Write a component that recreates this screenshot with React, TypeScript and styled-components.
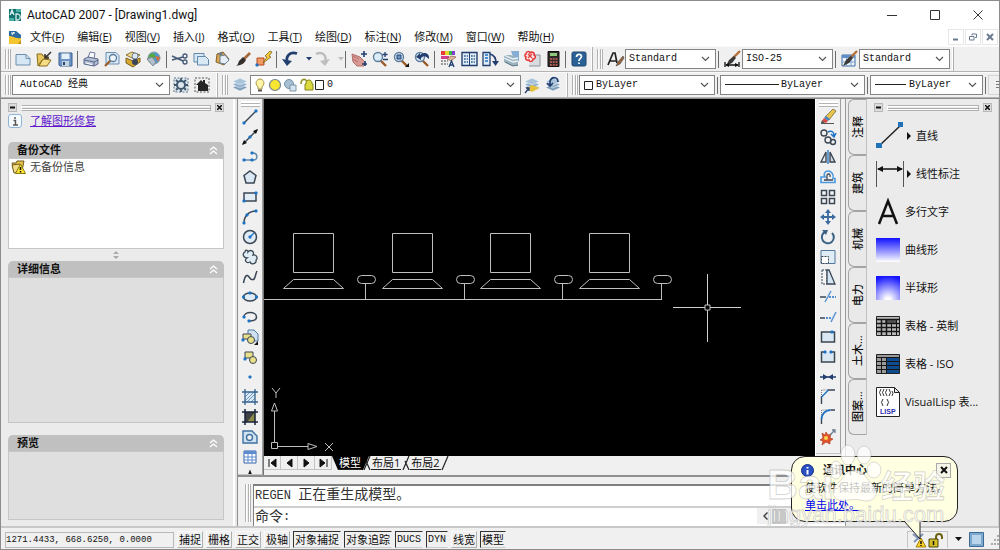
import React from "react";
import styled, { createGlobalStyle, css } from "styled-components";

const ui = '"Open Sans", "Noto Sans CJK SC", sans-serif';
const mono = '"Liberation Mono", "Noto Sans CJK SC", monospace';

const GlobalStyle = createGlobalStyle`
  * { box-sizing: border-box; }
  body { margin: 0; background: #f0f0f0; }
  button, select, input { font: inherit; color: inherit; margin: 0; }
  button { padding: 0; border: 0; background: none; }
`;

/* ---------- frame ---------- */

const Window = styled.div`
  position: relative;
  display: flex;
  flex-direction: column;
  height: 100vh;
  min-height: 520px;
  overflow: hidden;
  border: 1px solid #8c8c8c;
  background: #f0f0f0;
  color: #111;
  font: 11px/16px ${ui};
`;

const TitleBar = styled.header`
  display: flex;
  align-items: center;
  height: 27px;
  flex: none;
  padding-left: 7px;
  background: #fff;
`;

const Title = styled.h1`
  flex: 1;
  margin: 0 0 0 5px;
  font: 400 12px/16px Roboto, sans-serif;
`;

const CaptionButton = styled.button`
  display: grid;
  place-items: center;
  width: 43px;
  height: 26px;
`;

const MenuBar = styled.nav`
  display: flex;
  align-items: center;
  height: 18px;
  flex: none;
  padding-left: 7px;
  background: #fff;
`;

const MenuList = styled.div`
  display: flex;
  flex: 1;
  gap: 13px;
  margin-left: 7px;
`;

const MenuButton = styled.button`
  white-space: nowrap;
`;

const ChildButton = styled.button`
  display: grid;
  place-items: center;
  width: 16px;
  height: 16px;
  margin-right: 1px;
  border: 1px solid #e6e6e6;
`;

/* ---------- toolbars ---------- */

const ToolRow = styled.div`
  display: flex;
  height: 26px;
  flex: none;
  overflow: hidden;
  border-top: 1px solid #fafafa;
  border-bottom: 1px solid #b4b4b4;
`;

const Bar = styled.div<{ $end?: number }>`
  display: flex;
  align-items: center;
  flex: none;
  padding: 0 ${(p) => p.$end ?? 3}px 0 4px;
  border-right: 1px solid #b0b0b0;
  box-shadow: inset -1px 0 #fff;
`;

const Grip = styled.div`
  width: 6px;
  height: 20px;
  margin-right: 1px;
  border: solid #b2b2b2;
  border-width: 0 1px;
  background: linear-gradient(90deg, #fff 1px, #f0f0f0 1px, #f0f0f0 2px, #b2b2b2 2px, #b2b2b2 3px, #fff 3px);
`;

const ToolButton = styled.button<{ $w?: number }>`
  display: grid;
  place-items: center;
  flex: none;
  width: ${(p) => p.$w ?? 21}px;
  height: 20px;
`;

const DisabledField = styled.button`
  display: grid;
  place-items: center start;
  flex: none;
  width: 90px;
  height: 20px;
  padding-left: 7px;
  border: 1px solid #d4d4d4;
`;

const Separator = styled.span`
  width: 1px;
  height: 17px;
  margin: 0 2px;
  background: #6c6c6c;
`;

const Glyph = styled.svg`
  display: block;
  overflow: visible;
`;

const ComboFrame = styled.div<{ $w: number }>`
  display: flex;
  align-items: center;
  position: relative;
  flex: none;
  width: ${(p) => p.$w}px;
  height: 20px;
  border: 1px solid #848484;
  background: #fff;
`;

const ComboSelect = styled.select<{ $pad: number }>`
  flex: 1;
  min-width: 0;
  height: 18px;
  padding: 0 16px 0 ${(p) => p.$pad}px;
  border: 0;
  outline: 0;
  background: none;
  appearance: none;
  font: 10px/18px ${mono};
`;

const ComboSwatch = styled.span`
  position: absolute;
  left: 4px;
  display: flex;
  align-items: center;
  pointer-events: none;
`;

const ComboArrow = styled.svg`
  position: absolute;
  right: 5px;
  pointer-events: none;
`;

/* ---------- work area ---------- */

const Workspace = styled.div`
  display: flex;
  flex: 1;
  min-height: 0;
  border-top: 1px solid #8a8a8a;
`;

const Recovery = styled.aside`
  display: flex;
  flex-direction: column;
  flex: none;
  width: 232px;
  padding: 4px 9px 6px 7px;
  background: #ebebeb;
`;

const Splitter = styled.div`
  flex: none;
  width: 5px;
  border: solid #8f8f8f;
  border-width: 0 1px 0 0;
  background: linear-gradient(90deg, #fff 2px, #e8e8e8 2px);
`;

const PaletteHead = styled.div`
  display: flex;
  align-items: center;
  flex: none;
  height: 9px;
  gap: 4px;
`;

const PaletteGrip = styled.span`
  flex: 1;
  height: 6px;
  border: 1px solid #b0b0b0;
  border-left-color: #fff;
  background: linear-gradient(#fff 1px, #ebebeb 1px, #ebebeb 2px, #b0b0b0 2px, #b0b0b0 3px, #fff 3px);
`;

const PaletteButton = styled.button`
  display: grid;
  place-items: center;
  width: 9px;
  height: 9px;
  border: 1px solid #b8b8b8;
  background: #dcdcdc;
`;

const InfoRow = styled.div`
  display: flex;
  align-items: center;
  flex: none;
  gap: 8px;
  height: 18px;
  margin-bottom: 12px;
`;

const InfoLink = styled.a`
  color: #6018cc;
`;

const Card = styled.section<{ $grow: number }>`
  display: flex;
  flex-direction: column;
  flex: ${(p) => p.$grow} 1 0;
  min-height: 30px;
`;

const CardHead = styled.h2`
  display: flex;
  align-items: center;
  justify-content: space-between;
  flex: none;
  height: 16px;
  margin: 0;
  padding: 0 6px 0 9px;
  border-radius: 5px 5px 0 0;
  background: #c0c0c0;
  font-size: 11px;
  font-weight: 700;
`;

const CardBody = styled.div<{ $bg: string }>`
  display: flex;
  align-items: flex-start;
  gap: 4px;
  flex: 1;
  padding: 0 2px;
  border: 1px solid #c6c6c6;
  background: ${(p) => p.$bg};
  color: #444;
`;

const CardGap = styled.div`
  display: grid;
  place-items: center;
  flex: none;
  height: 12px;
`;

const Center = styled.main`
  display: flex;
  flex-direction: column;
  flex: 1;
  min-width: 0;
`;

const CenterTop = styled.div`
  display: flex;
  flex: 1;
  min-height: 0;
  border-bottom: 2px solid #8f8f8f;
`;

const SideTools = styled.div<{ $gap?: number }>`
  display: flex;
  flex-direction: column;
  align-items: center;
  flex: none;
  width: 25px;
  height: max-content;
  max-height: 100%;
  overflow: hidden;
  margin-right: ${(p) => p.$gap ?? 0}px;
  padding: 2px 2px 6px;
  border-right: 1px solid #a0a0a0;
  border-bottom: 1px solid #c4c4c4;
`;

const SideGrip = styled.span`
  width: 19px;
  height: 6px;
  flex: none;
  border: solid #b4b4b4;
  border-width: 0 0 1px;
  background: linear-gradient(#fff 2px, #b4b4b4 2px, #b4b4b4 3px, #fff 3px);
`;

const DrawColumn = styled.div`
  display: flex;
  flex-direction: column;
  flex: 1;
  min-width: 0;
  border-left: 1px solid #777;
  border-right: 1px solid #fff;
`;

const Canvas = styled.svg`
  display: block;
  flex: 1;
  width: 100%;
  min-height: 0;
  background: #000;
`;

const LayoutTabs = styled.div`
  display: flex;
  align-items: stretch;
  flex: none;
  height: 14px;
  margin-bottom: 5px;
  background: #f0f0f0;
`;

const NavButton = styled.button`
  display: grid;
  place-items: center;
  width: 17px;
  border: solid #c4c4c4;
  border-width: 0 1px 1px 0;
`;

const LayoutTab = styled.button<{ $active?: boolean }>`
  padding: 0 1px;
  border-bottom: 1px solid #222;
  line-height: 12px;
  ${(p) =>
    p.$active &&
    css`
      background: #000;
      color: #fff;
    `}
`;

const Command = styled.div`
  display: flex;
  flex: none;
  height: 49px;
  padding: 7px 0 0 7px;
`;

const CommandGrip = styled(Grip)`
  height: 38px;
  margin-right: 2px;
`;

const CommandBox = styled.div`
  display: flex;
  flex-direction: column;
  flex: 1;
  border: solid #808080;
  border-width: 2px 0 0 1px;
  background: #fff;
  font: 12px/20px ${mono};
  color: #333;
`;

const History = styled.div`
  height: 23px;
  padding-left: 1px;
  line-height: 18px;
  border-bottom: 2px solid #cfcfcf;
`;

const Cjk = styled.span`
  font-size: 14px;
`;

const Prompt = styled.label`
  display: flex;
  padding-left: 1px;
  line-height: 18px;
`;

const PromptInput = styled.input`
  flex: 1;
  min-width: 0;
  height: 17px;
  padding: 0 2px;
  border: 0;
  outline: 0;
`;

const ScrollStub = styled.span`
  display: flex;
  align-items: center;
  gap: 4px;
  width: 88px;
  height: 16px;
  padding-left: 6px;
  background: #f0f0f0;
`;

const Thumb = styled.span`
  width: 14px;
  height: 15px;
  background: #c8c8c8;
`;

/* ---------- tool palettes ---------- */

const TabStrip = styled.div`
  display: flex;
  flex-direction: column;
  flex: none;
  width: 22px;
  padding-left: 2px;
  border-left: 1px solid #999;
  background: #ebebeb;
`;

const SideTab = styled.button`
  height: 56px;
  flex: none;
  border: 1px solid #a4a4a4;
  border-right-color: #c0c0c0;
  border-radius: 6px 0 0 6px;
  background: #e9e9e9;
  writing-mode: vertical-rl;
  text-orientation: sideways;
  font-weight: 500;
  line-height: 17px;

  span {
    display: block;
    transform: rotate(180deg);
  }
`;

const Palette = styled.aside`
  flex: none;
  width: 132px;
  padding: 4px 6px 0 7px;
  border-right: 1px solid #d0d0d0;
  background: #ebebeb;
`;

const PaletteList = styled.div`
  display: flex;
  flex-direction: column;
  padding: 5px 0 0 2px;
`;

const PaletteItem = styled.button`
  display: flex;
  align-items: center;
  gap: 5px;
  height: 38px;
  white-space: nowrap;

  > svg { overflow: visible; }
`;

const ItemLabel = styled.span`
  display: flex;
  align-items: center;
  gap: 5px;
`;

/* ---------- status bar ---------- */

const Status = styled.footer`
  display: flex;
  align-items: center;
  flex: none;
  height: 23px;
  padding: 2px 0 0 4px;
  border-top: 2px solid #c8c8c8;
`;

const Coords = styled.output`
  width: 169px;
  height: 16px;
  margin-right: 3px;
  border: 1px solid #b8b8b8;
  font: 9px/15px ${mono};
`;

const Toggle = styled.button<{ $on?: boolean; $latin?: boolean }>`
  height: 17px;
  margin-right: 3px;
  padding: 0 1px;
  border: 1px solid;
  border-color: ${(p) => (p.$on ? "#333 #f0f0f0 #ccc #333" : "#fafafa #b0b0b0 #b0b0b0 #fafafa")};
  line-height: 15px;
  white-space: nowrap;
  ${(p) => p.$latin && css`font: 10px/15px ${mono};`}
`;

const Tray = styled.div`
  display: flex;
  align-items: center;
  margin-left: auto;
  gap: 7px;
`;

const TrayBox = styled.div`
  display: flex;
  gap: 1px;
  align-items: center;
  height: 17px;
  padding: 0 3px;
  border: solid #c4c4c4;
  border-width: 1px 1px 0;
`;

/* ---------- notification ---------- */

const Balloon = styled.div`
  position: absolute;
  right: 41px;
  bottom: 27px;
  width: 167px;
  height: 66px;
  padding: 4px 6px 0 9px;
  border: 1px solid #222;
  border-radius: 14px;
  background: #ffffe1;
`;

const BalloonHead = styled.div`
  display: flex;
  align-items: center;
  gap: 9px;
  height: 18px;

  strong { flex: 1; }
`;

const BalloonText = styled.p`
  margin: 0 0 0 4px;
  line-height: 17px;
  white-space: nowrap;

  a { color: #0000ee; }
`;

const BalloonClose = styled.button`
  display: grid;
  place-items: center;
  width: 15px;
  height: 15px;
  border: 1px solid #aaa;
  background: #f4f4e8;
`;

const BalloonTail = styled.svg`
  position: absolute;
  right: 36px;
  top: 64px;
`;

const Watermark = styled.svg`
  position: absolute;
  right: 42px;
  bottom: 16px;
  pointer-events: none;
`;

/* ---------- drawings of the icons, all on an 18 x 18 grid ---------- */

const ink = "#3b4754";
const blue = "#1c72c4";
const navy = "#233f70";
const pale = "#cfe0f1";

const dots = (...pts: [number, number][]) =>
  pts.map(([x, y]) => <rect key={`${x}-${y}`} x={x - 1.5} y={y - 1.5} width="3" height="3" rx="1" fill={blue} />);

const magnifier = (
  <>
    <path d="m9 10 6 6" stroke="#9a5a28" strokeWidth="2.4" />
    <circle cx="7" cy="7" r="4.5" fill="#dcebf8" stroke="#5e7f9c" strokeWidth="1.4" />
  </>
);

const layers = (
  <>
    <path d="m9 8 7.500 3.500L9 15 1.500 11.500Z" fill="#7d9cbb" stroke="#fff" strokeWidth=".5" />
    <path d="m9 5 7.500 3.500L9 12 1.500 8.500Z" fill="#8fadc9" stroke="#fff" strokeWidth=".5" />
    <path d="m9 2 7.500 3.500L9 9 1.500 5.500Z" fill="#a9c3da" stroke="#fff" strokeWidth=".5" />
  </>
);

const brush = (
  <>
    <path d="M17 1 9 9" stroke="#b5703a" strokeWidth="2.4" />
    <path d="m11 6 2 2-4 5-6 3 3-6Z" fill="#3a3a3a" />
  </>
);

const art: Record<string, React.ReactNode> = {
  new: <path d="M2 4.500h10l4 4V15H2Z M12 4.500v4h4" fill="#d5e6f4" stroke="#6c8fae" />,
  open: (
    <>
      <path d="M2 4h5l1 2h5v3l-6 1-4 6Z" fill="#e8c75e" stroke="#8b6c1a" />
      <path d="M4 16 8 9l8 1-4 6Z" fill="#f6dc84" stroke="#8b6c1a" />
      <path d="m16 2-6 6m0-4v4h4" fill="none" stroke="#333" strokeWidth="1.500" />
    </>
  ),
  save: (
    <>
      <path d="M3 3h13v13H4l-1-1Z" fill="#6b93c4" stroke="#3c5f8d" />
      <path d="M5.500 3.500h8V9h-8Z" fill="#e6f0f8" />
      <path d="M6 11h7v5H6Z" fill="#c3d3e2" /><path d="M7 12h2v3H7Z" fill="#2c4569" />
    </>
  ),
  print: (
    <>
      <path d="M6 8 8 2l5 1-1 6" fill="#f7f9fd" stroke="#6e7c9c" />
      <path d="m2 9 4-2 10 2v5l-4 2-10-2Z" fill="#b5c0d6" stroke="#59678a" />
      <path d="m2 10 10 2 4-2m-4 2v4" fill="none" stroke="#59678a" />
      <path d="m4 13 6 1.500" stroke="#fff" />
    </>
  ),
  preview: (
    <>
      <path d="M3 2.500h10l3 3V14H3Z" fill="#d8e8f5" stroke="#6c8fae" />
      <path d="m8 10-6 6" stroke="#9a5a28" strokeWidth="2.200" />
      <circle cx="10" cy="8" r="3.500" fill="#eef6fc" stroke="#587a9b" strokeWidth="1.300" />
    </>
  ),
  publish: (
    <>
      <path d="m2 5 6-3 8 3-6 4Z" fill="#f2dd8f" stroke="#8d7430" />
      <circle cx="11" cy="6" r="3" fill="#dfe9f3" stroke="#6a7f94" />
      <path d="m2 8 7 3 7-3v4l-7 5-7-4Z" fill="#d6a72e" stroke="#7c6421" />
      <circle cx="11" cy="12" r="3" fill="#39465a" />
    </>
  ),
  web: (
    <>
      <circle cx="9" cy="8" r="6" fill="#4c9bd0" stroke="#8a9aa6" />
      <path d="M5 4c3-2 6 0 5 3s-4 3-5 6c-2-2-2-7 0-9Z" fill="#57a843" />
      <path d="m2 9 5-2 4 5-3 4Z" fill="#b4c0cc" stroke="#7a8794" /><path d="m10 6 5 1-2 5Z" fill="#d66a3a" />
    </>
  ),
  cut: (
    <>
      <path d="m1 6 11 5M1 10l11-3" stroke="#475a78" strokeWidth="1.500" />
      <circle cx="14" cy="6" r="2" fill="none" stroke="#475a78" strokeWidth="1.300" />
      <circle cx="14" cy="12" r="2" fill="none" stroke="#475a78" strokeWidth="1.300" />
    </>
  ),
  copy: (
    <>
      <path d="M2 3.500h10V12H2Z" fill="#d8e8f5" stroke="#6187aa" />
      <path d="M5.500 6.500h8l3 3V15h-11Z" fill="#d8e8f5" stroke="#6187aa" />
    </>
  ),
  paste: (
    <>
      <path d="m4 4 6-2 6 7-5 6-8-3Z" fill="#dca64c" stroke="#7d6132" />
      <path d="m7 6 5-1 4 5-4 4-5-1Z" fill="#e6eff7" stroke="#6b7f92" /><path d="m5 4 3-2 2 2-3 2Z" fill="#707c88" />
    </>
  ),
  match: (
    <>
      <path d="m16 3-6 6" stroke="#a4683a" strokeWidth="2.600" />
      <path d="m9 7 3 3c-2 4-5 5-10 6 2-1 2-3 3-5Z" fill="#33302e" />
    </>
  ),
  block: (
    <>
      <path d="M2 8h7v7H2Z" fill="#f29a64" stroke="#b1481e" />
      <path d="m15 1-5 5 2 1-4 6 8-6-2-1 3-4Z" fill="#f5cf3b" stroke="#83641c" strokeWidth=".8" />
      {dots([2, 15])}
    </>
  ),
  undo: (
    <>
      <path d="M16 3.500C9 1 5 6 6 11" fill="none" stroke={navy} strokeWidth="2.800" />
      <path d="m1 9 5 7 5-5Z" fill={navy} />
    </>
  ),
  redo: (
    <>
      <path d="M3 4c7-3 11 2 9 8" fill="none" stroke="#bdbdbd" strokeWidth="2.400" />
      <path d="m17 9-5 7-5-5Z" fill="#bdbdbd" />
    </>
  ),
  down: <path d="m6 7 6 0-3 3.500Z" fill={navy} />,
  downOff: <path d="m6 7 6 0-3 3.500Z" fill="#bdbdbd" />,
  pan: (
    <>
      <path d="m2 4 8 3 5 5-1 4-7 0-4-4Z" fill="#d99a94" stroke="#b2706c" />
      <path d="m3 6 6 3M3 9l5 3" stroke="#b2706c" />
      <path d="M14 1v6m-3-3h6M15 11v5m-3-2h5" stroke={navy} strokeWidth="1.600" />
    </>
  ),
  zoomRt: <>{magnifier}<path d="M14 2v5m-2.500-2.500h5M12 9.500h5" stroke={navy} strokeWidth="1.300" /></>,
  zoomWin: <>{magnifier}<path d="M5 5h4v4H5Z" fill="#6e98c4" stroke={navy} /><path d="M17 13v4h-4Z" fill="#111" /></>,
  zoomPrev: <>{magnifier}<path d="M16 9c1-6-5-8-9-4V3L3 7l5 3V8c3-3 5-2 8 1Z" fill={navy} /></>,
  props: (
    <>
      <path d="M2 1h4v4H2Z" fill="#e83a3a" /><path d="M6 1h4v4H6Z" fill="#e9d32d" /><path d="M10 1h3v4h-3Z" fill="#38b34a" /><path d="M13 1h3v4h-3Z" fill="#7b3fd0" />
      <path d="M2 6h8v3H2Z" fill="#d23f8c" /><path d="m8 9 4-3 5 1-5 4Z" fill="#e2b49a" stroke="#8a5f48" strokeWidth=".7" />
      <path d="M2 11h7M2 14h7" stroke="#444" strokeDasharray="2 1" /><path d="m10 17 2.500-6 2.500 6m-4-2h3" fill="none" stroke={navy} strokeWidth="1.300" />
    </>
  ),
  center: (
    <>
      <path d="M2 2.500h15v13H2Z" fill="#e1edf6" stroke={navy} strokeWidth="1.400" />
      <path d="M9.500 3v12" stroke={navy} />
      <path d="M4 6h4M4 9h4M4 12h4M11 6h4M11 9h4M11 12h4" stroke="#5c82a8" strokeWidth="2" strokeDasharray="1.700 1" />
    </>
  ),
  palettes: (
    <>
      <path d="M2 2.500h7v13H2Z" fill="#e1edf6" stroke={navy} strokeWidth="1.300" />
      <path d="M4 5h3M4 8h3M4 11h3" stroke={blue} strokeWidth="1.600" />
      <path d="M9 4c4 1 6 4 6 9" fill="none" stroke={navy} strokeWidth="1.800" />
      <path d="m11 11 7 0-3.500 5Z" fill={navy} />
    </>
  ),
  sheets: (
    <>
      <path d="M9 1h8v10l-4 2Z" fill="#86add4" />
      <path d="M2 5h7l7 4v7l-6 0-8-4Z" fill="#9db4c0" />
      <path d="m2 5 9 4 5-1M2 8l9 4 5-1" fill="none" stroke="#e9f1f5" strokeWidth="1.300" />
      <path d="m3 12 8 4 5-1" fill="none" stroke="#5d7685" />
    </>
  ),
  markup: (
    <>
      <path d="M8 5h9v11H6" fill="#d9dde2" stroke="#8c939b" />
      <path d="M3 4c0-3 4-3 4-1 2-2 5 0 4 2 2 1 2 4-1 4 0 3-4 3-4 1-3 1-4-2-3-3-2-1-1-3 0-3Z" fill="#fbe4e4" stroke="#e23a3a" strokeWidth="1.500" />
      <path d="m5 4 4 4m0-4L5 8" stroke="#e23a3a" strokeWidth="1.200" />
    </>
  ),
  calc: (
    <>
      <path d="M4 1.500h11v15H4Z" fill="#2f2b2b" stroke="#111" /><path d="M6 3h7v3H6Z" fill="#8fca7c" />
      <path d="M6 9h7.500M6 12h7.500M6 15h7.500" stroke="#e06a5c" strokeWidth="1.600" strokeDasharray="1.800 1" />
    </>
  ),
  help: (
    <>
      <rect x="2" y="2" width="14" height="14" rx="1.500" fill="#2a6298" stroke="#1d456e" />
      <path d="M6.500 7c0-3.500 5-3.500 5-.5C11.500 8.500 9 8.500 9 11m0 1.500V14" fill="none" stroke="#fff" strokeWidth="1.700" />
    </>
  ),
  textStyle: <>
    <path d="M2 15 7 3h2l2 10M4 11h6" fill="none" stroke="#222" strokeWidth="1.700" />
    <path d="m17 6-5 6-2 4 4-2 4-6Z" fill="#9a6238" stroke="#444" strokeWidth=".6" /></>,
  dimStyle: <>{brush}<path d="M2 12v5m14-5v5M3 15h12" stroke="#111" strokeWidth="1.300" /><path d="m2 15 4-2v4Zm14 0-4-2v4Z" fill="#111" /></>,
  tableStyle: <>
    <path d="M2 5h13v11H2Z" fill="#eef4fb" stroke="#3d6ca4" /><path d="M2 5h13v3H2Z" fill="#5f8fca" />
    <path d="M2 12h13M6.500 8v8M11 8v8" stroke="#7ea3cf" />{brush}</>,
  gear: (
    <>
      <path d="M2 2h14v14H2Z" fill="#dfe7ee" stroke="#60758a" strokeDasharray="2 1.500" />
      <circle cx="9" cy="9" r="4" fill="none" stroke="#40586f" strokeWidth="2" />
      <path d="M9 2v3m0 8v3M2 9h3m8 0h3M4 4l2 2m6 6 2 2m0-10-2 2m-6 6-2 2" stroke="#40586f" strokeWidth="1.800" />
    </>
  ),
  house: (
    <>
      <path d="M2 2h14v14H2Z" fill="none" stroke="#555" strokeDasharray="2 1.500" />
      <path d="m3 9 5-5 2 2V4h2v3l3 2v6H5V9Z" fill="#262626" />
    </>
  ),
  layers,
  layerCurrent: <>{layers}<path d="m9 9 7.500 3L9 16l-6-3Z" fill="#e4c23c" /><path d="m2 17 4-5m-3 0h3v3" stroke={navy} fill="none" strokeWidth="1.300" /></>,
  layerPrev: <>{layers}<path d="M14 6c0-5-6-6-8-1v4m-3-2 3 3 3-3" stroke={navy} fill="none" strokeWidth="1.700" /></>,

  line: <><path d="M3 15 15 3" stroke={ink} strokeWidth="1.500" />{dots([3, 15], [15, 3])}</>,
  xline: <><path d="M2 16 16 2" stroke={ink} strokeWidth="1.500" /><path d="m1 17 2-5 3 3Zm16-16-2 5-3-3Z" fill="#111" />{dots([9, 9])}</>,
  pline: <><path d="M3 12h10M12 5c5 0 5 7 1 7" fill="none" stroke="#5e89ad" strokeWidth="1.500" />{dots([3, 12], [11, 12], [11, 5])}</>,
  polygon: <path d="m9 3 6 4.500L13 15H5L3 7.500Z" fill="#d9e8f4" stroke={ink} strokeWidth="1.500" />,
  rect: <><path d="M3 5h12v8H3Z" fill="#e3edf5" stroke={ink} strokeWidth="1.500" />{dots([3, 13], [15, 5])}</>,
  arc: <><path d="M3 15C3 8 8 3 15 3" fill="none" stroke={ink} strokeWidth="1.500" />{dots([3, 15], [6, 7], [15, 3])}</>,
  circle: <><circle cx="9" cy="9" r="6.500" fill="#dfebf5" stroke={ink} strokeWidth="1.500" /><path d="m9 9 4-4" stroke={blue} strokeWidth="1.300" />{dots([9, 9])}</>,
  cloud: <path d="M7 4c2-3 7-1 5 3 4-1 5 4 3 5 1 4-5 5-6 2-4 2-6-2-3-4-4 0-5-5-2-6 0-3 3-2 3 0Z" fill="#dfebf5" stroke={ink} strokeWidth="1.300" />,
  spline: <path d="M2.500 15C4 7 6 6 8 9s5 4 6 0c1-3 1-4 2-6" fill="none" stroke={ink} strokeWidth="1.500" />,
  ellipse: <><ellipse cx="9" cy="9" rx="6.500" ry="4" fill="#dfebf5" stroke={ink} strokeWidth="1.500" />{dots([2.500, 9], [15.500, 9], [9, 5])}</>,
  ellipseArc: <><path d="M3 9C3 3 15.500 3 15.500 9c0 3-3 4-7 4" fill="none" stroke={ink} strokeWidth="1.500" />{dots([3, 9], [8, 13])}</>,
  insert: (
    <>
      <path d="M7 2h6l4 4v7H7Z" fill={pale} stroke="#4d7ba6" /><path d="M2 6h8v5H2Z" fill="#e9e08a" stroke={ink} />
      <circle cx="10" cy="12" r="3.500" fill="#e9e08a" stroke={ink} /><path d="M17 13v4h-4Z" fill="#111" />{dots([2, 12])}
    </>
  ),
  makeBlock: <><path d="M4 4h8v6H4Z" fill="#e9e08a" stroke={ink} /><circle cx="12" cy="12" r="3.500" fill="#e9e08a" stroke={ink} />{dots([4, 11])}</>,
  point: <>{dots([9, 9])}</>,
  hatch: (
    <>
      <path d="M4 4h10v10H4Z" fill="#dbe9f5" /><path d="M4 9 9 4M4 13l9-9M6 14l8-8M10 14l4-4" stroke="#6f9ac2" />
      <path d="M4 1v16M14 1v16M1 4h16M1 14h16" stroke="#35628f" strokeWidth="1.300" />
    </>
  ),
  gradient: <><path d="M4 4h10v10H4Z" fill="#3d4045" /><path d="M14 4v10H6Z" fill="#8f8a45" /><path d="M4 1v16M14 1v16M1 4h16M1 14h16" stroke="#17223a" strokeWidth="1.500" /></>,
  region: <><path d="M2 3h9l5 5v7H2Z" fill="#cfe2f2" stroke="#3f709f" strokeWidth="1.400" /><circle cx="8.500" cy="9.500" r="3" fill="#f0f0f0" stroke="#3f709f" strokeWidth="1.400" /></>,
  table: <><path d="M3 3h12v12H3Z" fill="#fff" stroke="#3665a8" /><path d="M3 3h12v3H3Z" fill="#5d8bd0" /><path d="M3 9h12M3 12h12M7 6v9M11 6v9" stroke="#5d8bd0" /></>,
  mtext: <path d="m5 14 4-10 4 10m-7-4h6" fill="none" stroke="#111" strokeWidth="1.800" />,

  erase: (
    <>
      <path d="M2 15.500h13" stroke="#555" />
      <path d="m6 9 8-8 3 2-7 9Z" fill="#e9c44c" stroke="#6a5a30" strokeWidth=".7" />
      <path d="m7 8 4 3-2 2-4-3Z" fill="#4a86c4" /><path d="m5 10 4 3-2 2-4-2Z" fill="#d9483e" />
      <path d="m3 12-1 3h4Z" fill="#555" />
    </>
  ),
  copyObj: <>
    <circle cx="5" cy="5" r="3" fill="none" stroke={ink} strokeWidth="1.400" /><circle cx="9" cy="12" r="3" fill="none" stroke={ink} strokeWidth="1.400" />
    <circle cx="14" cy="14" r="2.500" fill="none" stroke={ink} strokeWidth="1.400" /><path d="M9 4c4-2 6 0 6 4m-3-2 3 3 2-4" fill="none" stroke={blue} strokeWidth="1.500" /></>,
  mirror: <><path d="M7 4v10H2Z" fill="none" stroke={ink} strokeWidth="1.400" /><path d="M11 4v10h5Z" fill="#cfd6dd" stroke={ink} strokeWidth="1.400" /><path d="M9 2v14" stroke={blue} strokeWidth="1.300" /></>,
  offset: (
    <>
      <path d="M2 14.500h14v-4h-2C15 6 12 3 9 3S4 6 6 9H2Z" fill="none" stroke="#4b9ade" strokeWidth="1.600" />
      <path d="M5 12h9M8 12V9c-1-4 4-4 3 0" fill="none" stroke={ink} strokeWidth="1.300" />
    </>
  ),
  array: <path d="M2.500 2.500h5v5h-5Zm8 0h5v5h-5Zm-8 8h5v5h-5Zm8 0h5v5h-5Z" fill="#f4f4f4" stroke={ink} strokeWidth="1.500" />,
  move: <><path d="M9 3v12M3 9h12" stroke="#3c6ba0" strokeWidth="1.800" /><path d="m9 1 3 4H6Zm0 16 3-4H6ZM1 9l4-3v6Zm16 0-4-3v6Z" fill="#3c6ba0" /></>,
  rotate: <><path d="M6 4a6 6 0 1 0 7 1" fill="none" stroke="#3c6386" strokeWidth="2" /><path d="m3 2 6 0-2 5Z" fill="#3c6386" /></>,
  scale: <><path d="M2 2.500h14v13H2Z" fill="#dfebf5" stroke="#53789c" /><path d="M2.500 8.500h7v7h-7Z" fill="#fff" stroke={ink} strokeDasharray="2 1" /></>,
  stretch: <><path d="M3 2h5v14H3Z" fill="#f4f4f4" stroke={ink} strokeDasharray="2 1" /><path d="m8 2 2 0 6 14H8Z" fill="#d6e5f2" stroke={ink} strokeWidth="1.300" /></>,
  trim: <><path d="M1 9h6" stroke={ink} strokeWidth="1.500" /><path d="M10 9h7" stroke={blue} strokeDasharray="2 1" strokeWidth="1.300" /><path d="m12 3-6 11" stroke="#5a94cf" strokeWidth="1.500" /></>,
  extend: <><path d="M1 10h5" stroke={ink} strokeWidth="1.500" /><path d="M7 10h6" stroke={blue} strokeDasharray="2 1" strokeWidth="1.300" /><path d="m17 4-5 10" stroke="#5a94cf" strokeWidth="1.500" /></>,
  breakPt: <><path d="M2.500 4h13v10h-13Z" fill="#dbe8f3" stroke={ink} strokeWidth="1.500" />{dots([13, 4])}</>,
  breakObj: <><path d="M6 4H2.500v10h13V4H12" fill="#dbe8f3" stroke={ink} strokeWidth="1.500" />{dots([6, 4], [12, 4])}</>,
  join: <><path d="M1 9h16" stroke={navy} strokeWidth="1.500" /><path d="m9 9-5-3v6Zm0 0 5-3v6Z" fill={navy} /></>,
  chamfer: <><path d="M2.500 16V8m6-6H16" stroke={ink} strokeWidth="1.400" /><path d="m2.500 9 7-7" stroke={blue} strokeWidth="1.500" /><path d="M2.500 7V2H8" fill="none" stroke="#777" strokeDasharray="1 1" /></>,
  fillet: <><path d="M2.500 16v-5m9-9H16" stroke={ink} strokeWidth="1.400" /><path d="M2.500 11c0-5 4-9 9-9" fill="none" stroke={blue} strokeWidth="2" /><path d="M2.500 7V2H8" fill="none" stroke="#777" strokeDasharray="1 1" /></>,
  explode: <>
    <path d="m3 5 3 2 1-3 2 3 3-1-1 4 3 1-3 2 0 3-4-2-4 3 1-4-3-1 3-2Z" fill="#e4542c" stroke="#a33216" strokeWidth=".6" />
    <circle cx="7" cy="10" r="2" fill="#f8d651" /><path d="m11 7 5-5m-3 0h3v3" fill="none" stroke="#6d8093" strokeWidth="1.300" /></>,
};

const Icon = ({ name }: { name: string }) => (
  <Glyph width="18" height="18" viewBox="0 0 18 18" fill="none" aria-hidden="true">
    {art[name]}
  </Glyph>
);

const Tools = ({ names }: { names: string[] }) => (
  <>
    {names.map((n, i) =>
      n === "|" ? (
        <Separator key={i} />
      ) : (
        <ToolButton key={i} aria-label={n} $w={n.startsWith("down") ? 11 : 21}>
          <Icon name={n} />
        </ToolButton>
      )
    )}
  </>
);

type ComboProps = { label: string; value: string; w: number; pad?: number; children?: React.ReactNode };

const Combo = ({ label, value, w, pad = 3, children }: ComboProps) => (
  <ComboFrame $w={w}>
    {children && <ComboSwatch>{children}</ComboSwatch>}
    <ComboSelect aria-label={label} $pad={pad}>
      <option>{value}</option>
    </ComboSelect>
    <ComboArrow width="9" height="6" viewBox="0 0 9 6">
      <path d="m1 1 3.500 3.500L8 1" fill="none" stroke="#555" strokeWidth="1.200" />
    </ComboArrow>
  </ComboFrame>
);

const LineSample = ({ w }: { w: number }) => (
  <svg width={w} height="2"><path d={`M0 .5h${w}`} stroke="#222" /></svg>
);

const LayerMarks = () => (
  <svg width="70" height="16" viewBox="0 0 70 16" fill="none">
    <path d="M3 10C-1 6 2 2 5 2s6 4 2 8v2H3Z" fill="#fff5a8" stroke="#a89545" />
    <path d="M3 13.500h4" stroke="#555" strokeWidth="2" />
    <circle cx="20" cy="8" r="5.500" fill="#f7e532" stroke="#6f8292" strokeWidth="1.200" />
    <circle cx="34" cy="7" r="4.500" fill="#a9c0d2" stroke="#6f8fa8" />
    <path d="M35 8h6v6h-6Z" fill="#d5e4ef" stroke="#7d97ac" />
    <path d="M46 7c0-6 6-6 6-1v3" stroke="#97962d" strokeWidth="1.600" />
    <path d="M51 6c0-4 6-4 6 0v1h1v6h-8V7h1Z" fill="#dcd93e" stroke="#86851f" />
    <path d="M60.500 3.500h8v9h-8Z" fill="#fff" stroke="#222" />
  </svg>
);

const menus: [string, string][] = [
  ["文件", "F"], ["编辑", "E"], ["视图", "V"], ["插入", "I"], ["格式", "O"], ["工具", "T"],
  ["绘图", "D"], ["标注", "N"], ["修改", "M"], ["窗口", "W"], ["帮助", "H"],
];

const standardTools = [
  "new", "open", "save", "|", "print", "preview", "publish", "web", "|", "cut", "copy", "paste", "match", "block", "|",
  "undo", "down", "redo", "downOff", "|", "pan", "zoomRt", "zoomWin", "zoomPrev", "|",
  "props", "center", "palettes", "sheets", "markup", "calc", "|", "help",
];

const drawTools = [
  "line", "xline", "pline", "polygon", "rect", "arc", "circle", "cloud", "spline", "ellipse", "ellipseArc",
  "insert", "makeBlock", "point", "hatch", "gradient", "region", "table", "mtext",
];

const modifyTools = [
  "erase", "copyObj", "mirror", "offset", "array", "move", "rotate", "scale", "stretch", "trim", "extend",
  "breakPt", "breakObj", "join", "chamfer", "fillet", "explode",
];

const PaletteHeader = () => (
  <PaletteHead>
    <PaletteButton aria-label="最小化">
      <svg width="5" height="3"><path d="M0 1.500h5" stroke="#111" strokeWidth="2" /></svg>
    </PaletteButton>
    <PaletteGrip />
    <PaletteButton aria-label="关闭">
      <svg width="5" height="5"><path d="m0 0 5 5m0-5L0 5" stroke="#111" strokeWidth="1.500" /></svg>
    </PaletteButton>
  </PaletteHead>
);

const Collapse = () => (
  <svg width="9" height="9" viewBox="0 0 9 9">
    <path d="m1 4 3.500-3L8 4M1 8l3.500-3L8 8" fill="none" stroke="#fff" strokeWidth="1.300" />
  </svg>
);

const Station = ({ x }: { x: number }) => (
  <g transform={`translate(${x} 0)`}>
    <path d="M29.500 134.500h40v39h-40Z" />
    <path d="M29.500 180.500h40l10 9h-60Z" />
    <rect x="93.500" y="176.500" width="18" height="8" rx="4" />
    <path d="M101.500 184.500v16" />
  </g>
);

const Drawing = () => (
  <Canvas role="img" aria-label="图形窗口">
    <g fill="none" stroke="#c0c0c0">
      {[0, 99, 197, 296].map((x) => <Station key={x} x={x} />)}
      <path d="M0 200.500h398" />
      <path d="M409 208.500h68M443.500 175v68" stroke="#d0d0d0" />
      <path d="M441 206h5v5h-5Z" fill="#000" />
      <path d="M7.500 343.500h6v6h-6Z M10.500 343v-31M14 347.500h30" />
      <path d="m10.500 304 3 8h-6Z M53 347.500l-9-3v6Z" />
      <path d="m8 289 4 5 4-5m-4 5v5M61 344l8 8m0-8-8 8" />
    </g>
  </Canvas>
);

const gradientIcon = (id: string, radial: boolean) => (
  <svg width="24" height="24">
    <defs>
      {radial ? (
        <radialGradient id={id} cx=".5" cy="1" r="1"><stop offset=".1" stopColor="#fff" /><stop offset="1" stopColor="#1414ff" /></radialGradient>
      ) : (
        <linearGradient id={id} x2="0" y2="1"><stop stopColor="#1010ff" /><stop offset="1" stopColor="#fff" /></linearGradient>
      )}
    </defs>
    <path d="M0 0h24v24H0Z" fill={`url(#${id})`} />
  </svg>
);

const tableIcon = (iso: boolean) => (
  <svg width="24" height="20">
    <path d="M.5.500h23v19H.5Z" fill={iso ? "#9a9a9a" : "#b8b8b8"} stroke="#222" />
    {iso && <path d="M10 3h13v16H10Z" fill="#0e4c8f" />}
    {!iso && <path d="M9 3h11v4H9Z" fill="#555" />}
    <path d="M0 3.500h24M0 7.500h24M0 11.500h24M0 15.500h24M5.500 3v16M10.500 3v16" stroke="#151515" strokeWidth={iso ? 1 : 1.500} />
    {!iso && <path d="M15.500 7v12M20.500 3v16" stroke="#151515" />}
  </svg>
);

const paletteItems: { label: string; flyout?: boolean; icon: React.ReactNode }[] = [
  {
    label: "直线", flyout: true,
    icon: <svg width="26" height="28"><path d="M3 24 25 3" stroke="#222" strokeWidth="1.500" /><path d="M0 21h6v5H0ZM22 0h5v5h-5Z" fill="#1f72b8" /></svg>,
  },
  {
    label: "线性标注", flyout: true,
    icon: <svg width="26" height="26"><path d="M.5 0v26M27.500 0v26" stroke="#555" /><path d="M2 8h24" stroke="#111" strokeWidth="1.500" /><path d="m1 8 6-3v6Zm26 0-6-3v6Z" fill="#111" /></svg>,
  },
  { label: "多行文字", icon: <svg width="24" height="26"><path d="m3 25 9-23 9 23M6 17h12" fill="none" stroke="#111" strokeWidth="2.500" /></svg> },
  { label: "曲线形", icon: gradientIcon("curved", false) },
  { label: "半球形", icon: gradientIcon("hemisphere", true) },
  { label: "表格 - 英制", icon: tableIcon(false) },
  { label: "表格 - ISO", icon: tableIcon(true) },
  {
    label: "VisualLisp 表...",
    icon: (
      <svg width="24" height="30">
        <path d="M.5.500h18l5 5v24H.5Z M18.500.500v5h5" fill="#fff" stroke="#222" />
        <path d="M5 2Q2 5.500 5 9M8 2Q5 5.500 8 9M11 2Q8 5.500 11 9M13 2q3 3.500 0 7M16 4q2 2 0 5M7 12q-3 3 0 7M11 12q3 3 0 7" fill="none" stroke="#333" />
        <text x="4" y="27" fontFamily="Liberation Sans" fontSize="7" fontWeight="700" fill="#2c2cae">LISP</text>
      </svg>
    ),
  },
];

const toggles: { label: string; on?: boolean; latin?: boolean }[] = [
  { label: "捕捉" }, { label: "栅格" }, { label: "正交" }, { label: "极轴" },
  { label: "对象捕捉", on: true }, { label: "对象追踪", on: true },
  { label: "DUCS", on: true, latin: true }, { label: "DYN", on: true, latin: true },
  { label: "线宽" }, { label: "模型", on: true },
];

const Slash = ({ dark }: { dark?: boolean }) => (
  <svg width="9" height="14">
    {dark && <path d="M0 0h7L1 14H0Z" fill="#000" />}
    <path d="M8 0 2 14M4 5l4 9" fill="none" stroke="#222" strokeWidth="1.200" />
  </svg>
);

export default function App() {
  return (
    <>
      <GlobalStyle />
      <Window>
        <TitleBar>
          <svg width="14" height="14" viewBox="0 0 14 14">
            <path d="M1 1h12v12H1Z" fill="#12736e" />
            <path d="m2 7 2-5 2 5M3 5h2M8 12V6h2c3 1 3 5 0 6Z" fill="none" stroke="#d7efed" strokeWidth="1.300" />
            <path d="M1 10h5v3H1ZM8 1h5v3H8Z" fill="#4bb0a8" />
          </svg>
          <Title>AutoCAD 2007 - [Drawing1.dwg]</Title>
          <CaptionButton aria-label="最小化"><svg width="10" height="10"><path d="M0 5.500h10" stroke="#333" /></svg></CaptionButton>
          <CaptionButton aria-label="最大化"><svg width="10" height="10"><path d="M.5.500h9v9h-9Z" fill="none" stroke="#333" /></svg></CaptionButton>
          <CaptionButton aria-label="关闭"><svg width="10" height="10"><path d="m.5.500 9 9m0-9-9 9" stroke="#333" /></svg></CaptionButton>
        </TitleBar>

        <MenuBar>
          <svg width="15" height="15" viewBox="0 0 15 15">
            <path d="M1 1h7l5 4v9H1Z" fill="#2c6aa0" /><path d="M1 6c4 0 6 3 12 2v6H1Z" fill="#f3c631" />
            <path d="M3 3h4M4 5l2-3" stroke="#fff" /><path d="m10 14 3-4v4Z" fill="#c98a16" />
          </svg>
          <MenuList>
            {menus.map(([t, k]) => (
              <MenuButton key={k}>{t}(<u>{k}</u>)</MenuButton>
            ))}
          </MenuList>
          <ChildButton aria-label="最小化窗口"><svg width="8" height="8"><path d="M1 6.500h5" stroke="#6a7b90" strokeWidth="2" /></svg></ChildButton>
          <ChildButton aria-label="还原窗口"><svg width="8" height="8"><path d="M3 2.500V1h4.500v3.500H6M.5 3.500H5V7H.5Z" fill="none" stroke="#6a7b90" /></svg></ChildButton>
          <ChildButton aria-label="关闭窗口"><svg width="8" height="8"><path d="m1 1 6 6m0-6L1 7" stroke="#6a7b90" strokeWidth="2" /></svg></ChildButton>
        </MenuBar>

        <ToolRow>
          <Bar><Grip /><Tools names={standardTools} /></Bar>
          <Bar>
            <Grip />
            <Tools names={["textStyle"]} /><Combo label="文字样式" value="Standard" w={91} /><Separator />
            <Tools names={["dimStyle"]} /><Combo label="标注样式" value="ISO-25" w={91} /><Separator />
            <Tools names={["tableStyle"]} /><Combo label="表格样式" value="Standard" w={91} />
          </Bar>
        </ToolRow>
        <ToolRow>
          <Bar $end={5}><Grip /><Combo label="工作空间" value="AutoCAD 经典" w={158} pad={7} /><Tools names={["gear", "house"]} /></Bar>
          <Bar $end={4}>
            <Grip /><Tools names={["layers"]} />
            <Combo label="图层" value="0" w={271} pad={76}><LayerMarks /></Combo>
            <Tools names={["layerCurrent", "layerPrev"]} />
          </Bar>
          <Bar>
            <Grip />
            <Combo label="颜色" value="ByLayer" w={136} pad={16}>
              <svg width="9" height="9"><path d="M.5.500h8v8h-8Z" fill="#fff" stroke="#222" /></svg>
            </Combo>
            <Separator />
            <Combo label="线型" value="ByLayer" w={145} pad={60}><LineSample w={54} /></Combo>
            <Separator />
            <Combo label="线宽" value="ByLayer" w={113} pad={38}><LineSample w={31} /></Combo>
            <Separator />
            <DisabledField disabled aria-label="打印样式">
              <svg width="10" height="10"><path d="M0 1.500h9M0 4.500h9M0 7.500h9M4.500 0v10" stroke="#777" /></svg>
            </DisabledField>
          </Bar>
        </ToolRow>

        <Workspace>
          <Recovery>
            <PaletteHeader />
            <InfoRow>
              <svg width="14" height="14">
                <rect x=".5" y=".5" width="13" height="13" rx="2.500" fill="#f5fafe" stroke="#8eb4d8" />
                <path d="M7 3v2M5.500 6.500H7.500V11M5 11h5" fill="none" stroke="#555" strokeWidth="1.400" />
              </svg>
              <InfoLink href="#recovery">了解图形修复</InfoLink>
            </InfoRow>
            <Card $grow={108}>
              <CardHead>备份文件<Collapse /></CardHead>
              <CardBody $bg="#fff">
                <svg width="15" height="15">
                  <path d="M1 4h4l1-2h7l-2 10H3Z" fill="#e5c04a" stroke="#6e5a1d" /><path d="m1 6 8-1 3 7-9 2Z" fill="#f2dc86" stroke="#6e5a1d" />
                  <path d="m9.500 5 5 9.500h-10Z" fill="#ffe632" stroke="#8a7a10" /><path d="M9.500 8v3m0 1v1.500" stroke="#111" strokeWidth="1.500" />
                </svg>
                无备份信息
              </CardBody>
            </Card>
            <CardGap>
              <svg width="8" height="8"><path d="M1 3h6L4 0ZM1 5h6L4 8Z" fill="#aaa" /></svg>
            </CardGap>
            <Card $grow={163}>
              <CardHead>详细信息<Collapse /></CardHead>
              <CardBody $bg="#dfdfdf" />
            </Card>
            <CardGap />
            <Card $grow={85}>
              <CardHead>预览<Collapse /></CardHead>
              <CardBody $bg="#dfdfdf" />
            </Card>
          </Recovery>
          <Splitter />

          <Center>
            <CenterTop>
              <SideTools>
                <SideGrip />
                <Tools names={drawTools} />
              </SideTools>
              <DrawColumn>
                <Drawing />
                <LayoutTabs>
                  {["M3 2v8M10 2 5 6l5 4Z", "M9 2 4 6l5 4Z", "M4 2l5 4-5 4Z", "M10 2v8M3 2l5 4-5 4Z"].map((d, i) => (
                    <NavButton key={d} aria-label={["首个", "上一个", "下一个", "末个"][i]}>
                      <svg width="13" height="12"><path d={d} fill="#111" stroke="#111" /></svg>
                    </NavButton>
                  ))}
                  <svg width="6" height="14"><path d="m0 0 6 14V0Z" fill="#000" /></svg>
                  <LayoutTab $active>模型</LayoutTab>
                  <Slash dark />
                  <LayoutTab>布局1</LayoutTab>
                  <Slash />
                  <LayoutTab>布局2</LayoutTab>
                  <svg width="8" height="14"><path d="M7 0 1 14" stroke="#222" strokeWidth="1.200" /></svg>
                </LayoutTabs>
              </DrawColumn>
              <SideTools $gap={4}>
                <SideGrip />
                <Tools names={modifyTools} />
              </SideTools>
            </CenterTop>
            <Command>
              <CommandGrip />
              <CommandBox>
                <History>REGEN <Cjk>正在重生成模型。</Cjk></History>
                <Prompt>
                  <Cjk>命令</Cjk>:
                  <PromptInput spellCheck={false} />
                  <ScrollStub>
                    <svg width="5" height="8"><path d="M4.500.500 1 4l3.500 3.500" fill="none" stroke="#444" strokeWidth="1.500" /></svg>
                    <Thumb />
                  </ScrollStub>
                </Prompt>
              </CommandBox>
            </Command>
          </Center>

          <TabStrip>
            {["注释", "建筑", "机械", "电力", "土木...", "图案..."].map((t) => (
              <SideTab key={t}><span>{t}</span></SideTab>
            ))}
          </TabStrip>
          <Palette>
            <PaletteHeader />
            <PaletteList>
              {paletteItems.map((it) => (
                <PaletteItem key={it.label}>
                  {it.icon}
                  <ItemLabel>
                    {it.flyout && <svg width="4" height="8"><path d="m0 0 4 4-4 4Z" fill="#111" /></svg>}
                    {it.label}
                  </ItemLabel>
                </PaletteItem>
              ))}
            </PaletteList>
          </Palette>
        </Workspace>

        <Status>
          <Coords>1271.4433, 668.6250, 0.0000</Coords>
          {toggles.map((t) => (
            <Toggle key={t.label} $on={t.on} $latin={t.latin} aria-pressed={!!t.on}>{t.label}</Toggle>
          ))}
          <Tray>
            <TrayBox>
              <svg width="16" height="15">
                <path d="m2 1 6 5M12 1 3 9" stroke="#7e94b8" strokeWidth="2" />
                <path d="m10 5 5 9H5Z" fill="#f8cf26" stroke="#a8820e" /><path d="M10 8v3m0 1v1" stroke="#111" strokeWidth="1.500" />
              </svg>
              <svg width="16" height="15">
                <path d="M8 7V4c0-4 6-4 6 0v2" fill="none" stroke="#6f6214" strokeWidth="2" />
                <path d="M1 6h9v8H1Z" fill="#d3bf25" stroke="#4d440c" /><path d="M5.500 8v4" stroke="#111" strokeWidth="1.500" />
              </svg>
            </TrayBox>
            <svg width="7" height="5"><path d="M0 0h7L3.500 4Z" fill="#111" /></svg>
            <svg width="15" height="15"><path d="M.5.500h14v14H.5Z" fill="#7fa8cd" stroke="#3b6a97" /><path d="M3 3h9v9H3Z" fill="#b9d5ec" /></svg>
            <svg width="8" height="16">
              <path d="M6 4h2M3 8h2m1 0h2M0 12h2m1 0h2m1 0h2" stroke="#aaa" strokeWidth="2" />
            </svg>
          </Tray>
        </Status>

        <Balloon role="status">
          <BalloonHead>
            <svg width="13" height="13"><circle cx="6.500" cy="6.500" r="6" fill="#2a4fc0" stroke="#15318a" /><path d="M6.500 3v1.500M6.500 6v4.500" stroke="#fff" strokeWidth="2" /></svg>
            <strong>通讯中心</strong>
            <BalloonClose aria-label="关闭通知"><svg width="8" height="8"><path d="m1 1 6 6m0-6L1 7" stroke="#111" strokeWidth="2" /></svg></BalloonClose>
          </BalloonHead>
          <BalloonText>
            使软件保持最新的简单方法。<br />
            <a href="#update">单击此处。</a>
          </BalloonText>
          <BalloonTail width="18" height="20"><path d="M1 0 17 17V0" fill="#ffffe1" /><path d="M1 0 17 18V0" fill="none" stroke="#222" /></BalloonTail>
        </Balloon>

        <Watermark width="190" height="94" viewBox="0 0 190 94" fill="#fff" fillOpacity=".75" stroke="#999" strokeOpacity=".45" strokeWidth=".8">
          <text x="0" y="60" fontFamily="Liberation Sans" fontWeight="700" fontSize="43">Bai</text>
          <ellipse cx="81" cy="16" rx="7" ry="10" /><ellipse cx="97" cy="16" rx="7" ry="9" />
          <ellipse cx="69" cy="31" rx="6" ry="9" /><ellipse cx="107" cy="31" rx="7" ry="8" />
          <path d="M88 31c9 0 11 9 18 15 7 7 2 17-8 16-8-2-13-2-21 0-10 1-15-10-7-17 6-5 9-14 18-14Z" />
          <text x="114" y="59" fontFamily="Noto Sans CJK SC" fontWeight="700" fontSize="32">经验</text>
          <text x="0" y="83" fontFamily="Liberation Sans" fontSize="22">jingyan.baidu.com</text>
        </Watermark>
      </Window>
    </>
  );
}
